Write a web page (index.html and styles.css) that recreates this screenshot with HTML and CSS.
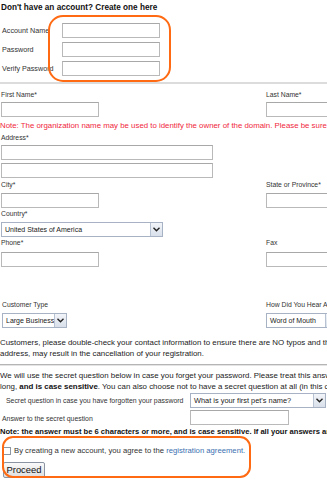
FILE: index.html
```html
<!DOCTYPE html>
<html>
<head>
<meta charset="utf-8">
<link rel="stylesheet" href="styles.css">
</head>
<body>
<div class="page">
  <h1 class="title">Don't have an account? Create one here</h1>
  <div class="account">
    <div class="arow"><span class="alabel">Account Name</span><span class="input w98"></span></div>
    <div class="arow"><span class="alabel">Password</span><span class="input w98"></span></div>
    <div class="arow"><span class="alabel">Verify Password</span><span class="input w98"></span></div>
  </div>
  <div class="hr1"></div>

  <div class="two first">
    <div class="col1"><div class="lbl">First Name*</div><span class="input w98"></span></div>
    <div class="col2"><div class="lbl">Last Name*</div><span class="input w98"></span></div>
  </div>
  <div class="note">Note: The organization name may be used to identify the owner of the domain. Please be sure to enter it correctly.</div>
  <div class="lbl addr">Address*</div>
  <span class="input w212 blk"></span>
  <span class="input w212 blk addr2"></span>
  <div class="two city">
    <div class="col1"><div class="lbl">City*</div><span class="input w98"></span></div>
    <div class="col2"><div class="lbl">State or Province*</div><span class="input w98"></span></div>
  </div>
  <div class="lbl country">Country*</div>
  <div class="select w162"><span class="val">United States of America</span><span class="arrow"><svg width="7" height="5" viewBox="0 0 7 5"><path d="M0.5 0.8 L3.5 3.8 L6.5 0.8" fill="none" stroke="#222" stroke-width="1.4"/></svg></span></div>
  <div class="two phone">
    <div class="col1"><div class="lbl">Phone*</div><span class="input w98"></span></div>
    <div class="col2"><div class="lbl">Fax</div><span class="input w98"></span></div>
  </div>

  <div class="two ctype">
    <div class="col1"><div class="lbl">Customer Type</div><div class="select w64"><span class="val">Large Business</span><span class="arrow"><svg width="7" height="5" viewBox="0 0 7 5"><path d="M0.5 0.8 L3.5 3.8 L6.5 0.8" fill="none" stroke="#222" stroke-width="1.4"/></svg></span></div></div>
    <div class="col2"><div class="lbl">How Did You Hear About Us?</div><div class="select w70"><span class="val">Word of Mouth</span><span class="arrow"><svg width="7" height="5" viewBox="0 0 7 5"><path d="M0.5 0.8 L3.5 3.8 L6.5 0.8" fill="none" stroke="#222" stroke-width="1.4"/></svg></span></div></div>
  </div>

  <p class="para p1">Customers, please double-check your contact information to ensure there are NO typos and that all information is accurate. Incorrect information, such as an invalid email<br>address, may result in the cancellation of your registration.</p>
  <div class="hr2"></div>
  <p class="para p2">We will use the secret question below in case you forget your password. Please treat this answer like a password: it must be 6 characters<br>long, <b>and is case sensitive</b>. You can also choose not to have a secret question at all (in this case, leave the fields blank).</p>

  <div class="srow sq">
    <span class="slabel">Secret question in case you have forgotten your password</span>
    <div class="select w136"><span class="val">What is your first pet's name?</span><span class="arrow"><svg width="7" height="5" viewBox="0 0 7 5"><path d="M0.5 0.8 L3.5 3.8 L6.5 0.8" fill="none" stroke="#222" stroke-width="1.4"/></svg></span></div>
  </div>
  <div class="srow sa">
    <span class="slabel sal">Answer to the secret question</span>
    <span class="input w99"></span>
  </div>
  <p class="bnote">Note: the answer must be 6 characters or more, and is case sensitive. If all your answers are blank, no secret question will be used.</p>

  <div class="agree"><span class="check"></span><span>By creating a new account, you agree to the <a class="link">registration agreement.</a></span></div>
  <div class="btnrow"><span class="btn">Proceed</span></div>

  <div class="ring ring1"></div>
  <div class="ring ring2"></div>
</div>
</body>
</html>
```
FILE: styles.css
```css
html, body {
  margin: 0;
  padding: 0;
  background: #fff;
  overflow: hidden;
}
.page {
  position: relative;
  width: 640px;
  height: 480px;
  overflow: hidden;
  font-family: "Liberation Sans", Arial, sans-serif;
  color: #222;
  font-size: 8px;
}
.page > * { white-space: nowrap; }
.title {
  margin: 0;
  padding: 2px 0 0 1px;
  font-size: 8.2px;
  line-height: 11px;
  font-weight: bold;
  color: #111;
}
.account {
  margin-top: 10px;
  display: flex;
  flex-direction: column;
  gap: 4px;
}
.arow {
  display: flex;
  align-items: center;
  height: 15px;
}
.alabel {
  width: 60px;
  flex: none;
  padding-left: 2px;
  font-size: 7.2px;
  color: #333;
}
.input {
  display: inline-block;
  box-sizing: border-box;
  height: 15px;
  border: 1px solid #b9b9b9;
  border-top-color: #a8a8a8;
  background: #fff;
  vertical-align: top;
  flex: none;
}
.blk { display: block; margin-left: 1px; }
.w98 { width: 98px; }
.w99 { width: 99px; }
.w212 { width: 212px; }
.hr1 {
  margin-top: 6px;
  height: 2px;
  background: #dcdcdc;
  width: 100%;
}
.lbl {
  font-size: 6.8px;
  line-height: 10px;
  color: #333;
  margin-bottom: 2px;
}
.two {
  display: flex;
}
.col1 {
  width: 266px;
  flex: none;
  padding-left: 1px;
  box-sizing: border-box;
}
.col2 { flex: none; }
.first { margin-top: 6px; }
.note {
  margin-top: 3px;
  font-size: 7.85px;
  line-height: 11px;
  color: #f0283c;
}
.addr { margin-top: 2px; padding-left: 1px; }
.addr2 { margin-top: 3px; }
.city { margin-top: 2px; }
.city .lbl { margin-bottom: 3px; }
.country { margin-top: 1px; padding-left: 1px; margin-bottom: 3px; }
.select {
  display: flex;
  box-sizing: border-box;
  height: 15px;
  border: 1px solid #a7b3c4;
  background: #fff;
  align-items: stretch;
  flex: none;
}
.w162 { width: 162px; margin-left: 1px; }
.w64 { width: 65px; }
.w70 { width: 72px; }
.w136 { width: 136px; }
.val {
  flex: 1;
  font-size: 7px;
  line-height: 13px;
  padding-left: 3px;
  color: #222;
  overflow: hidden;
}
.sq .val { font-size: 7.4px; }
.arrow {
  width: 11px;
  flex: none;
  border-left: 1px solid #b7c3d3;
  background: linear-gradient(#f2f5f9, #d9e0ea);
  display: flex;
  align-items: center;
  justify-content: center;
}
.phone { margin-top: 1px; }
.phone .lbl { margin-bottom: 4px; }
.ctype { margin-top: 33px; }
.ctype .col1 { padding-left: 2px; }
.ctype .lbl { margin-bottom: 3px; }
.para {
  margin: 0;
  font-size: 7.9px;
  line-height: 11px;
  color: #222;
}
.p1 { margin-top: 9px; }
.hr2 {
  margin-top: 5px;
  height: 1px;
  background: #b5b5b5;
  border-bottom: 1px solid #e4e4e4;
}
.p2 { margin-top: 4px; }
.p2 b { color: #111; }
.srow {
  display: flex;
  align-items: center;
  height: 15px;
}
.sq { margin-top: 1px; }
.sa { margin-top: 2px; }
.slabel {
  width: 190px;
  flex: none;
  padding-left: 6px;
  box-sizing: border-box;
  font-size: 6.9px;
  color: #333;
}
.sal { padding-left: 2px; padding-top: 2px; }
.bnote {
  margin: 1px 0 0 0;
  font-size: 7.6px;
  line-height: 11px;
  font-weight: bold;
  color: #111;
}
.agree {
  margin-top: 8px;
  display: flex;
  align-items: center;
  gap: 3px;
  padding-left: 3px;
  font-size: 7.7px;
  line-height: 11px;
  color: #333;
}
.check {
  width: 8px;
  height: 8px;
  box-sizing: border-box;
  border: 1px solid #8d96a3;
  background: #fff;
  flex: none;
}
.link { color: #3a6fb0; text-decoration: none; }
.btnrow { margin-top: 6px; padding-left: 3px; }
.btn {
  display: inline-block;
  box-sizing: border-box;
  width: 42px;
  height: 16px;
  border: 1px solid #8a94a3;
  border-radius: 2px;
  background: linear-gradient(#fafafa, #dedede);
  font-size: 9.4px;
  line-height: 14px;
  text-align: center;
  color: #111;
}
.ring {
  position: absolute;
  border: 2px solid #ff6a12;
  box-sizing: border-box;
}
.ring1 {
  left: 48px;
  top: 15px;
  width: 123px;
  height: 67px;
  border-radius: 15px;
}
.ring2 {
  left: 2px;
  top: 436px;
  width: 249px;
  height: 42px;
  border-radius: 11px;
}
```
